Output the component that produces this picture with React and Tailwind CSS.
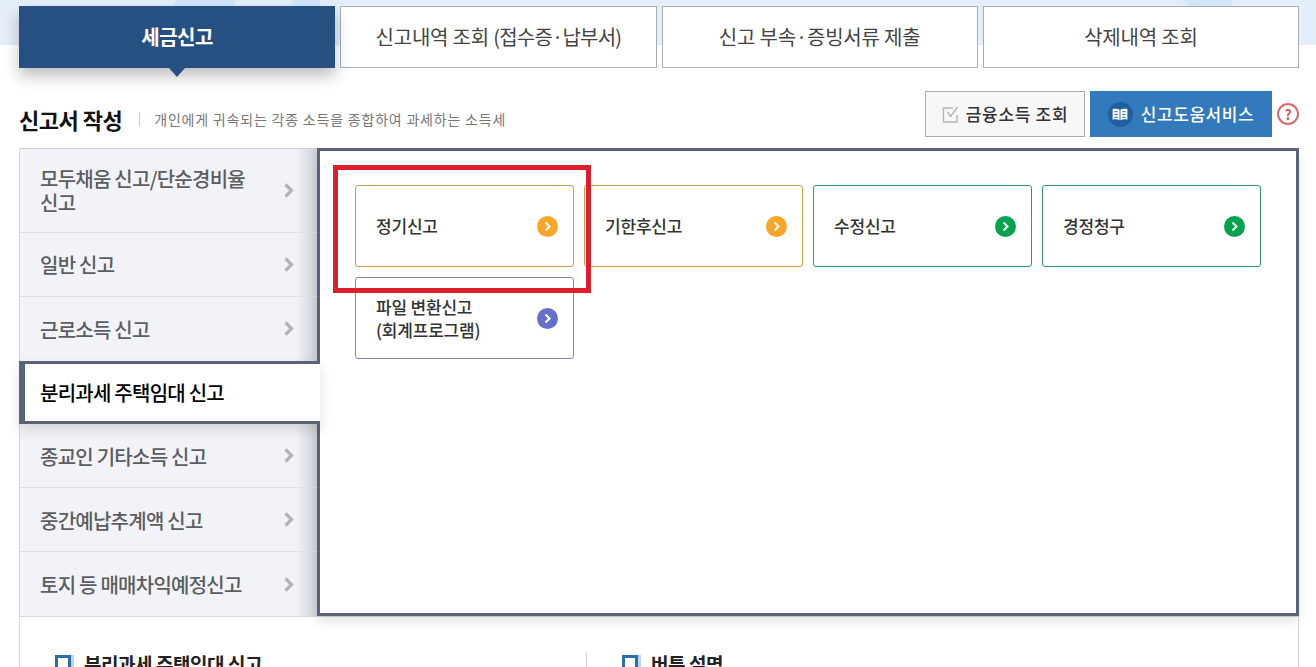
const menus = [
  { label: '모두채움 신고/단순경비율 신고', h: 'h-[84px]' },
  { label: '일반 신고', h: 'h-[64px]' },
  { label: '근로소득 신고', h: 'h-[64px]', last: true },
  { label: '분리과세 주택임대 신고', h: 'h-[64px]', active: true },
  { label: '종교인 기타소득 신고', h: 'h-[64px]' },
  { label: '중간예납추계액 신고', h: 'h-[64px]' },
  { label: '토지 등 매매차익예정신고', h: 'h-[64px]', last: true },
]

const cards = [
  { label: '정기신고', border: 'border-[#c9a24a]', dot: 'bg-[#f9a628]' },
  { label: '기한후신고', border: 'border-[#c9a24a]', dot: 'bg-[#f9a628]' },
  { label: '수정신고', border: 'border-[#2c9b68]', dot: 'bg-[#07a24f]' },
  { label: '경정청구', border: 'border-[#2c9b68]', dot: 'bg-[#07a24f]' },
  { label: '파일 변환신고\n(회계프로그램)', border: 'border-[#7f88a8]', dot: 'bg-[#666fcc]' },
]

function TabItem({ children, active }) {
  if (active) {
    return (
      <div className="relative flex h-[62px] items-center justify-center bg-[#275082] text-[20px] font-bold tracking-[-0.5px] text-white shadow-[0_8px_14px_rgba(0,0,0,0.25)]">
        {children}
        <span className="absolute left-1/2 top-full -ml-[8px] h-0 w-0 border-x-[8px] border-t-[9px] border-x-transparent border-t-[#275082]" />
      </div>
    )
  }
  return (
    <div className="flex h-[62px] items-center justify-center border border-[#a9adb5] bg-white text-[20px] tracking-[-0.2px] text-[#444]">
      <span>{children}</span>
    </div>
  )
}

function SideItem({ item }) {
  if (item.active) {
    return (
      <div className="relative z-10 -ml-[1px] -mr-[3px] flex h-[64px] items-center border-y-[3px] border-l-[6px] border-[#5a6479] bg-white pl-[15px] text-[20px] font-medium tracking-[-0.75px] text-black shadow-[0_6px_12px_rgba(0,0,0,0.12)]">
        <span className="pt-[1px]">{item.label}</span>
      </div>
    )
  }
  return (
    <div className={`${item.h} flex items-center justify-between bg-[linear-gradient(90deg,#f2f3f9_93%,#cfd0d3_100%)] pl-[20px] pr-[23px] ${item.last ? '' : 'border-b border-[#dfe0e4]'}`}>
      <span className="w-[215px] pt-[2px] text-[20px] font-medium leading-[24px] tracking-[-0.75px] text-[#5c5d61]">{item.label}</span>
      <svg width="10" height="15" viewBox="0 0 10 15" fill="none" stroke="#b0b2b8" strokeWidth="3.2">
        <path d="M1.5 1.5 L7.5 7.5 L1.5 13.5" />
      </svg>
    </div>
  )
}

function Card({ card }) {
  return (
    <div className={`flex h-[82px] items-center justify-between rounded-[3px] border ${card.border} bg-white pl-[20px] pr-[15px]`}>
      <span className="-mt-[1px] whitespace-pre-line text-[17px] font-medium leading-[23px] tracking-[-0.2px] text-[#333]">{card.label}</span>
      <span className={`flex h-[21px] w-[21px] items-center justify-center rounded-full ${card.dot}`}>
        <svg width="8" height="11" viewBox="0 0 8 11" fill="none" stroke="#fff" strokeWidth="2">
          <path d="M1.5 1.5 L5.5 5.5 L1.5 9.5" />
        </svg>
      </span>
    </div>
  )
}

function SubHead({ label }) {
  return (
    <div className="-mt-[2px] flex items-center gap-[13px]">
      <span className="relative h-[18px] w-[16px] border-[3px] border-b-0 border-[#2a6fb0] shadow-[3px_0_0_#b9d7f2]" />
      <span className="text-[19px] font-bold tracking-[-0.45px] text-[#222]">{label}</span>
    </div>
  )
}

export default function App() {
  return (
    <div className="relative h-[667px] w-[1316px] overflow-hidden bg-white font-['Noto_Sans_CJK_KR','Noto_Sans',sans-serif]">
      {/* top background band */}
      <div className="absolute inset-x-0 top-0 h-[45px] bg-[#e4eefb]">
        <svg className="absolute inset-0" width="1316" height="45" viewBox="0 0 1316 45" fill="#d2e5f9">
          <path d="M177 0 H235 V6 H172 Z" />
          <path d="M293 0 H320 V6 H290 Z" />
          <path d="M1182 0 H1232 L1236 45 H1222 Z" />
        </svg>
      </div>

      <div className="relative ml-[19px] w-[1280px] pt-[6px]">
        <div className="grid grid-cols-4 gap-[5px]">
          <TabItem active>세금신고</TabItem>
          <TabItem>
            신고내역 조회 <span className="tracking-[-0.8px]">(접수증·납부서)</span>
          </TabItem>
          <TabItem>신고 부속·증빙서류 제출</TabItem>
          <TabItem>삭제내역 조회</TabItem>
        </div>

        <div className="mt-[23px] flex h-[46px] items-center justify-between">
          <div className="flex items-center pt-[10px]">
            <h2 className="text-[22px] font-bold tracking-[-0.5px] text-[#111]">신고서 작성</h2>
            <span className="ml-[17px] mr-[14px] h-[14px] w-px bg-[#ccc]" />
            <p className="text-[14px] tracking-[0.8px] text-[#777]">개인에게 귀속되는 각종 소득을 종합하여 과세하는 소득세</p>
          </div>
          <div className="flex items-center">
            <button className="flex h-[46px] w-[160px] items-center justify-center gap-[7px] border border-[#a9a9a9] bg-[#f7f7f7] text-[17px] font-medium tracking-[0.7px] text-[#333]">
              <svg width="17" height="17" viewBox="0 0 17 17" fill="none" stroke="#b4b4b4" strokeWidth="1.4">
                <path d="M15 9 V16 H1.5 V2 H11" />
                <path d="M5.5 6 L8.5 10.5 L15.5 1" />
              </svg>
              금융소득 조회
            </button>
            <button className="ml-[5px] flex h-[46px] w-[182px] items-center justify-center gap-[8px] bg-[#337abd] text-[17px] font-medium tracking-[0.6px] text-white">
              <span className="flex h-[25px] w-[25px] items-center justify-center rounded-full bg-[#1f5f9f]">
                <svg width="18" height="15" viewBox="0 0 16 13" fill="#fff" stroke="#1f5f9f" strokeWidth="0.8">
                  <path d="M8 2 C6 0.8 3 0.8 1 1.2 V11.5 C3 11 6 11 8 12.2 C10 11 13 11 15 11.5 V1.2 C13 0.8 10 0.8 8 2 Z" />
                  <path d="M8 2 V12 M3 4 H6 M3 6.5 H6 M3 9 H6 M10 4 H13 M10 6.5 H13 M10 9 H13" fill="none" />
                </svg>
              </span>
              신고도움서비스
            </button>
            <span className="ml-[5px] flex h-[22px] w-[22px] items-center justify-center rounded-full border-2 border-[#d9696b] text-[14px] font-bold text-[#d9585a]">?</span>
          </div>
        </div>

        <div className="mt-[11px] border-x border-[#d6d6d6]">
          <div className="flex h-[468px]">
            <div className="flex w-[297px] shrink-0 flex-col border-t border-[#d0d0d0]">
              {menus.map((item) => (
                <SideItem key={item.label} item={item} />
              ))}
            </div>
            <div className="relative -mr-[1px] flex-1 border-[3px] border-[#5a6479] bg-white px-[35px] pt-[34px] shadow-[0_6px_10px_rgba(0,0,0,0.1)]">
              <div className="grid grid-cols-4 gap-[10px]">
                {cards.map((card) => (
                  <Card key={card.label} card={card} />
                ))}
              </div>
              {/* red highlight drawn over the first card */}
              <div className="absolute left-[13px] top-[14px] h-[128px] w-[258px] border-[5px] border-[#e01e2b]" />
            </div>
          </div>

          <div className="flex border-t border-[#d6d6d6] pt-[35px]">
            <div className="w-[566px] pl-[35px]">
              <SubHead label="분리과세 주택임대 신고" />
            </div>
            <div className="flex-1 border-l border-[#d6d6d6] pl-[35px]">
              <SubHead label="버튼 설명" />
            </div>
          </div>
        </div>
      </div>
    </div>
  )
}
